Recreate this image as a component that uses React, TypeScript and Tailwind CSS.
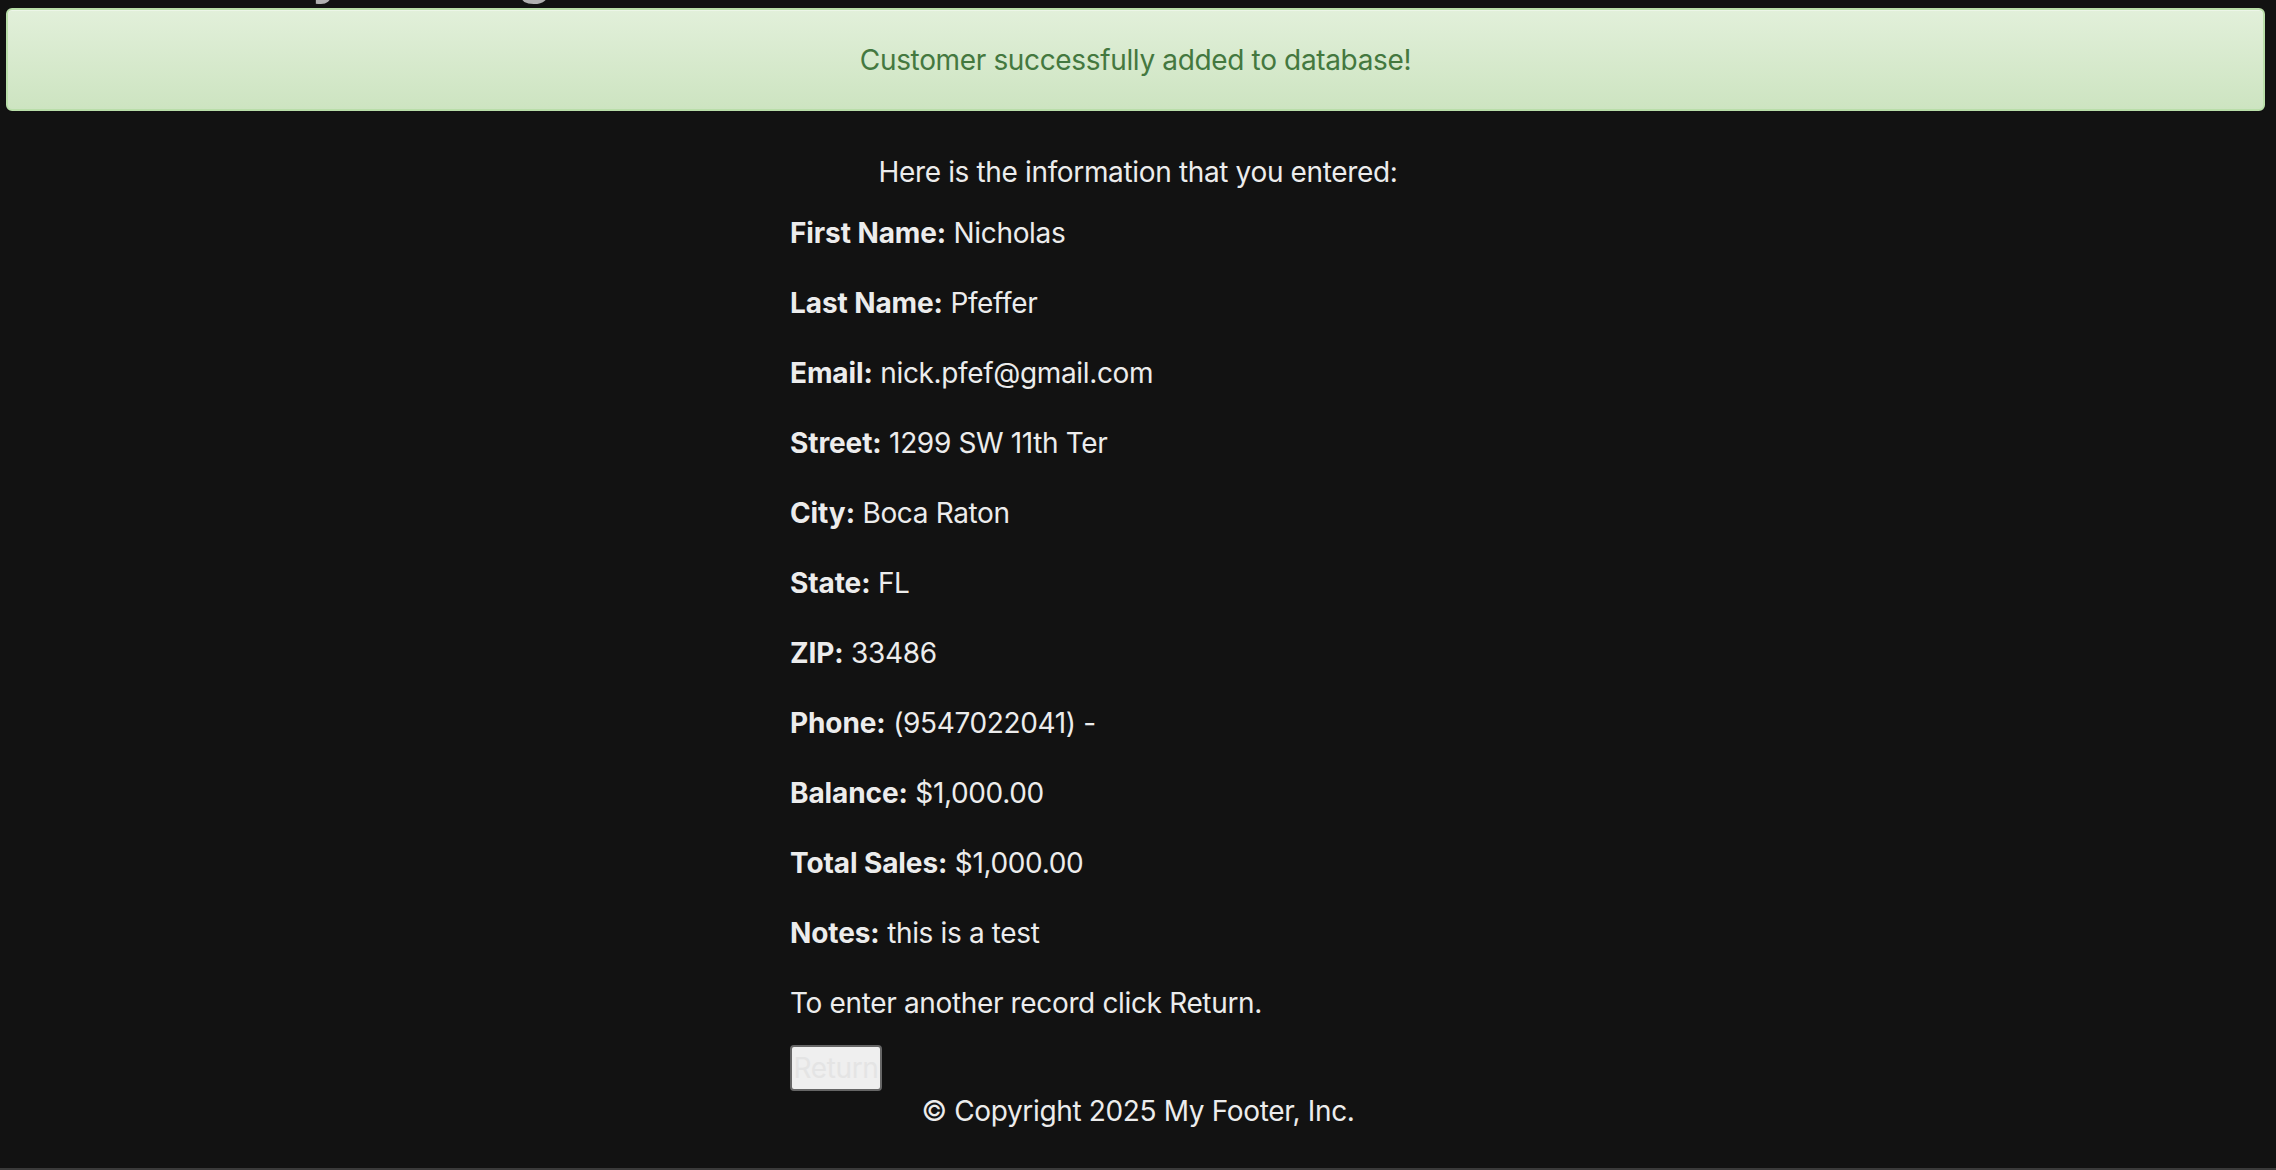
const fields: { label: string; value: string }[] = [
  { label: "First Name:", value: "Nicholas" },
  { label: "Last Name:", value: "Pfeffer" },
  { label: "Email:", value: "nick.pfef@gmail.com" },
  { label: "Street:", value: "1299 SW 11th Ter" },
  { label: "City:", value: "Boca Raton" },
  { label: "State:", value: "FL" },
  { label: "ZIP:", value: "33486" },
  { label: "Phone:", value: "(9547022041) -" },
  { label: "Balance:", value: "$1,000.00" },
  { label: "Total Sales:", value: "$1,000.00" },
  { label: "Notes:", value: "this is a test" },
];

export default function App() {
  return (
    <div className="relative h-[1170px] overflow-hidden bg-[#121212] border-b-2 border-[#3a3a3a] text-[#ececec] font-['Inter','Liberation_Sans',sans-serif] text-[28px] tracking-[-0.35px]">
      {/* page header, mostly scrolled out of view */}
      <div className="h-[8px] overflow-hidden flex items-end pl-[196px]">
        <span className="text-[60px] leading-[1.2] font-bold text-[#b0b0b0] whitespace-nowrap tracking-normal font-['Liberation_Sans',sans-serif]">
          Party Manager
        </span>
      </div>

      {/* success alert */}
      <div className="absolute top-[8px] left-[6px] right-[11px] h-[103px] flex items-center justify-center rounded-md border-2 border-[#b9dea9] bg-gradient-to-b from-[#e2f0da] to-[#cde4c1] shadow-[inset_0_1px_0_rgba(255,255,255,0.4),0_1px_2px_rgba(0,0,0,0.05)]">
        <p className="text-[#44783f] leading-[34px]">Customer successfully added to database!</p>
      </div>

      <div className="pt-[147px]">
        <p className="text-center leading-[34px]">Here is the information that you entered:</p>

        <div className="w-[696px] mx-auto mt-[27px]">
          {fields.map((f) => (
            <p key={f.label} className="leading-[34px] mb-[36px]">
              <span className="font-bold tracking-[-0.1px]">{f.label}</span> {f.value}
            </p>
          ))}
          <p className="leading-[34px]">To enter another record click Return.</p>
          <button
            type="button"
            className="mt-[25px] w-[92px] h-[46px] flex items-center justify-center rounded-[4px] border-2 border-[#666666] bg-[#efefef] text-[#e4e4e4] text-[28px] leading-none"
          >
            Return
          </button>
        </div>

        <p className="text-center leading-[34px] mt-[3px]">© Copyright 2025 My Footer, Inc.</p>
      </div>
    </div>
  );
}
